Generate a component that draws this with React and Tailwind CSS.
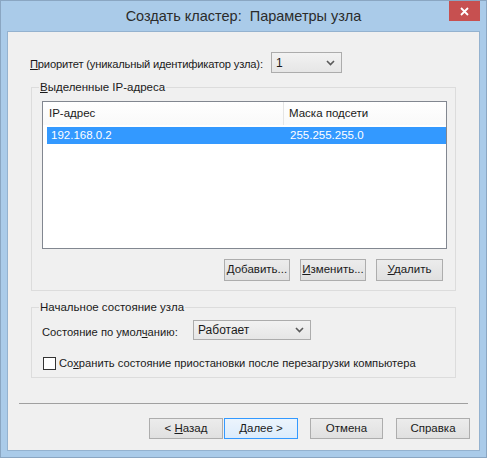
import React from 'react';

const font = { fontFamily: '"Liberation Sans", Arial, sans-serif' };

const Chevron = () => (
  <svg width="9" height="6" viewBox="0 0 9 6" className="shrink-0">
    <polyline points="1,1 4.5,4.5 8,1" fill="none" stroke="#5a5a5a" strokeWidth="1.6" />
  </svg>
);

const Combo = ({ value, className }) => (
  <div
    className={`flex items-center justify-between border border-[#acacac] bg-gradient-to-b from-[#f2f2f2] to-[#e6e6e6] pl-[4px] pr-[6px] text-[12px] text-[#1a1a1a] ${className}`}
  >
    <span>{value}</span>
    <Chevron />
  </div>
);

const Btn = ({ children, className = '', focused }) => (
  <div
    className={`flex items-center justify-center border ${
      focused ? 'border-[#3399ff] bg-gradient-to-b from-[#ecf4fc] to-[#dcecfc]' : 'border-[#adadad] bg-gradient-to-b from-[#ececec] to-[#e0e0e0]'
    } text-[11.5px] text-[#1a1a1a] ${className}`}
  >
    {children}
  </div>
);

const Group = ({ title, className = '', children }) => (
  <div className={`relative mx-[23px] border border-[#dcdcdc] ${className}`}>
    <span className="absolute left-[7px] top-[-8px] bg-[#f0f0f0] px-[1px] text-[11.5px] leading-[14px] text-[#1a1a1a]">
      {title}
    </span>
    {children}
  </div>
);

export default function App() {
  return (
    <div
      style={font}
      className="relative flex h-[458px] w-[487px] flex-col border border-[#8aa6c2] bg-[#aacbe9]"
    >
      {/* title bar */}
      <div className="flex h-[30px] shrink-0 items-center justify-center text-[14.5px] text-[#2b2b2b]">
        <span className="whitespace-pre pt-[1px]">Создать кластер:  Параметры узла</span>
      </div>
      <div className="absolute right-[6px] top-0 flex h-[20px] w-[31px] items-center justify-center bg-[#c75050]">
        <svg width="9" height="9" viewBox="0 0 9 9">
          <path d="M1 1 L8 8 M8 1 L1 8" stroke="#fff" strokeWidth="1.8" />
        </svg>
      </div>

      {/* client area */}
      <div className="mx-[6px] flex h-[420px] flex-col border border-[#94b2cf] bg-[#f0f0f0] text-[11.2px] text-[#1a1a1a]">
        <div className="mt-[20px] flex h-[21px] items-center">
          <span className="ml-[22px] w-[241px] whitespace-nowrap pt-[3px] tracking-[-0.2px]">
            <u>П</u>риоритет (уникальный идентификатор узла):
          </span>
          <Combo value="1" className="h-[21px] w-[71px]" />
        </div>

        <Group title={<><u>В</u>ыделенные IP-адреса</>} className="mt-[14px] h-[204px]">
          <div className="ml-[10px] mt-[13px] flex h-[148px] w-[405px] flex-col border border-[#828790] bg-white">
            <div className="flex h-[23px] bg-gradient-to-b from-white to-[#f9f9f9]">
              <div className="flex w-[241px] items-center border-r border-[#e5e5e5] pl-[6px] text-[11.5px]">IP-адрес</div>
              <div className="flex items-center pl-[5px] text-[11.5px]">Маска подсети</div>
            </div>
            <div className="ml-[4px] mt-[2px] flex h-[17px] items-center bg-[#3399ff] text-[11.5px] text-white">
              <span className="w-[237px] pl-[4px]">192.168.0.2</span>
              <span className="pl-[6px]">255.255.255.0</span>
            </div>
          </div>
          <div className="mr-[12px] mt-[10px] flex justify-end gap-[10px]">
            <Btn className="h-[22px] w-[66px]"><span><u>Д</u>обавить...</span></Btn>
            <Btn className="h-[22px] w-[66px]"><span><u>И</u>зменить...</span></Btn>
            <Btn className="h-[22px] w-[67px]"><span><u>У</u>далить</span></Btn>
          </div>
        </Group>

        <Group title="Начальное состояние узла" className="mt-[16px] h-[71px]">
          <div className="ml-[10px] mt-[12px] flex h-[20px] items-center">
            <span className="w-[151px] whitespace-nowrap pt-[5px]">
              Состояние по умол<u>ч</u>анию:
            </span>
            <Combo value="Работает" className="h-[20px] w-[118px]" />
          </div>
          <div className="ml-[11px] mt-[15px] flex items-center gap-[3px]">
            <div className="h-[13px] w-[13px] border border-[#333] bg-white" />
            <span className="whitespace-nowrap">
              Со<u>х</u>ранить состояние приостановки после перезагрузки компьютера
            </span>
          </div>
        </Group>

        <div className="mx-[11px] mt-[25px] h-px bg-[#a0a0a0]" />

        <div className="ml-[141px] mt-[14px] flex">
          <Btn className="h-[21px] w-[74px]"><span>&lt; <u>Н</u>азад</span></Btn>
          <Btn focused className="ml-[1px] h-[21px] w-[74px]"><span><u>Д</u>алее &gt;</span></Btn>
          <Btn className="ml-[12px] h-[21px] w-[73px]">Отмена</Btn>
          <Btn className="ml-[13px] h-[21px] w-[74px]">Справка</Btn>
        </div>
      </div>
    </div>
  );
}
